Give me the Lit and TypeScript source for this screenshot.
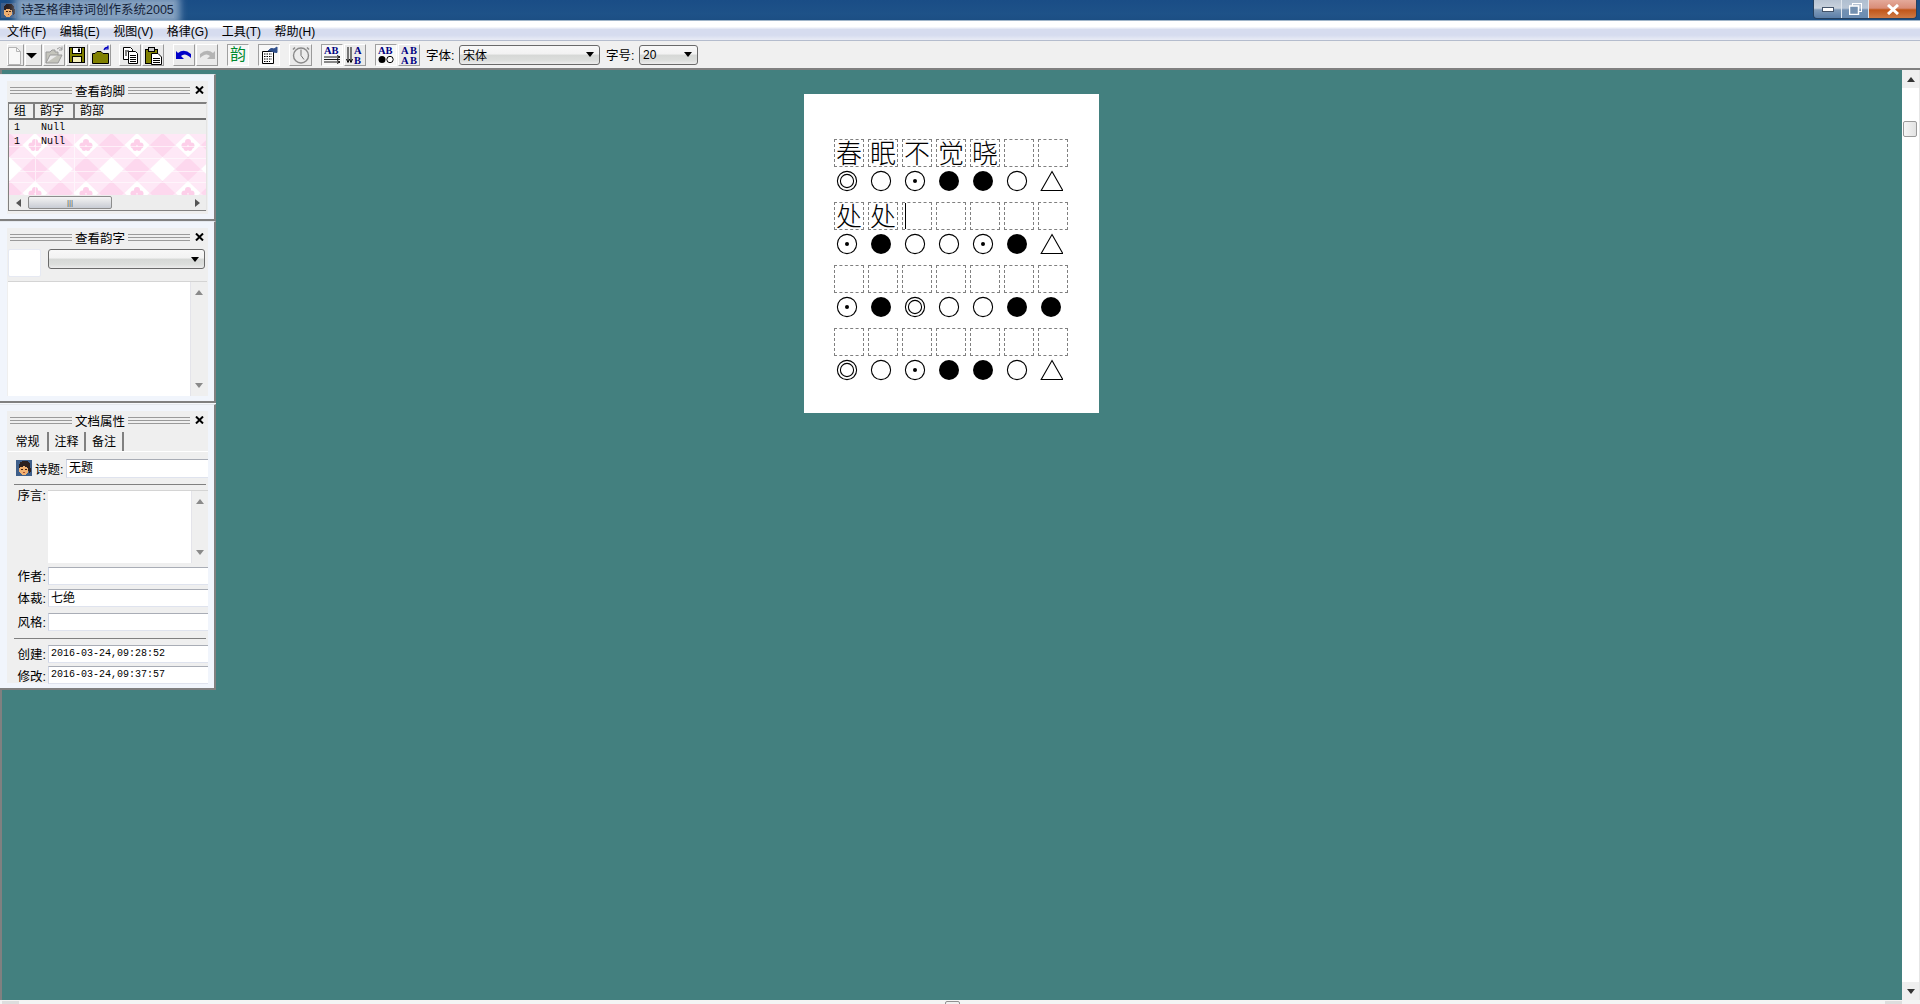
import { LitElement, html, css, svg, nothing } from "lit";
import { customElement } from "lit/decorators.js";

const avatar = (size: number) => html`<svg width=${size} height=${size} viewBox="0 0 16 16" shape-rendering="crispEdges">
  <rect width="16" height="16" fill="#3f5f8a"/>
  <path d="M3 6 L4 2 L7 1 L11 1 L14 4 L15 11 L13 13 L12 8 L8 6 L5 8 L3 9Z" fill="#2b2020"/>
  <path d="M3 8 L8 6 L12 8 L12 12 L9 15 L6 15 L3 12Z" fill="#f0b070"/>
  <rect x="5" y="9" width="2" height="1" fill="#402010"/><rect x="9" y="9" width="2" height="1" fill="#402010"/>
  <rect x="7" y="12" width="2" height="1" fill="#b05030"/>
</svg>`;

const I = {
  doc: svg`<path d="M3.5 3.5H11.5L15.5 7.5V20.5H3.5Z" fill="#f7f7f7" stroke="#b4b4b4"/><path d="M11.5 3.5V7.5H15.5" fill="none" stroke="#b4b4b4"/>`,
  drop: svg`<path d="M3 9H14L8.5 14.5Z" fill="#000"/>`,
  open: svg`<path d="M3 19V8H7L9 6H12V8H15V11H7L3 19H15L19 11H15" fill="#c4c4bc" stroke="#9a9a9a"/><path d="M14 5 Q17 2 19 5 M19 2.5V6H16" fill="none" stroke="#9a9a9a"/>`,
  save: svg`<rect x="3.5" y="3.5" width="15" height="15" fill="#808000" stroke="#000"/><rect x="6.5" y="3.5" width="9" height="6" fill="#fff" stroke="#000"/><rect x="12" y="4.5" width="2" height="3.5" fill="#000"/><rect x="6.5" y="12.5" width="9" height="6" fill="#f5f0c0" stroke="#000"/>`,
  folder: svg`<path d="M3.5 19.5V9.5H6L8 7.5H12L14 9.5H19.5V19.5Z" fill="#808000" stroke="#000"/><path d="M15 6 Q16 3 19 3.5M19 1.5V5H16" fill="none" stroke="#0000c0" stroke-width="1.2"/>`,
  copy: svg`<path d="M4.5 3.5H11.5L13.5 5.5V15.5H4.5Z" fill="#fff" stroke="#000"/><path d="M9.5 7.5H16.5L18.5 9.5V19.5H9.5Z" fill="#fff" stroke="#000"/><path d="M6 7H10M6 9H8M6 11H8M11 11.5H17M11 13.5H17M11 15.5H17M11 17.5H17" stroke="#000"/>`,
  paste: svg`<rect x="3.5" y="5.5" width="12" height="14" fill="#808000" stroke="#000"/><rect x="6.5" y="3.5" width="6" height="4" fill="#c8c8c8" stroke="#000"/><path d="M9.5 9.5H16L19.5 13V20.5H9.5Z" fill="#fff" stroke="#000"/><path d="M11 14.5H18M11 16.5H18M11 18.5H18" stroke="#000"/>`,
  undo: svg`<path d="M5 9 Q11 4 18 10 L18 14 Q12 8 8 12 L11 15 L3 15 L3 7Z" fill="#0000c8"/>`,
  redo: svg`<path d="M17 9 Q11 4 4 10 L4 14 Q10 8 14 12 L11 15 L19 15 L19 7Z" fill="#b4b4b4"/>`,
  props: svg`<path d="M4.5 7.5H15.5V19.5H4.5Z" fill="#fff" stroke="#000"/><path d="M6 10H14M6 12.5H14M6 15H14M6 17.5H12" stroke="#000" stroke-dasharray="1.5 1"/><path d="M10 7 Q13 3 16 5 L19 3V8.5L15 8" fill="#30508c" stroke="#30508c"/>`,
  clock: svg`<circle cx="11" cy="11.5" r="7.5" fill="#ececec" stroke="#8a8a8a" stroke-width="1.4"/><path d="M11 5.5V11.5L14 15.5" fill="none" stroke="#707070"/><path d="M5 3.5L3 5.5M17 3.5L19 5.5" stroke="#8a8a8a" stroke-width="1.5"/>`,
};

const ab = (inner: unknown) => html`<svg width="22" height="22" viewBox="0 0 22 22">${inner}</svg>`;
const T = (x: number, y: number, s: string, fs = 10.5) =>
  svg`<text x=${x} y=${y} font-family="Liberation Serif" font-weight="700" font-size=${fs} fill="#000080">${s}</text>`;

type Btn = { k?: unknown; txt?: boolean; on?: boolean; narrow?: boolean; wide?: boolean };
const groups: Btn[][] = [
  [{ k: I.doc, narrow: true }, { k: I.drop, narrow: true }, { k: I.open }, { k: I.save }, { k: I.folder }],
  [{ k: I.copy }, { k: I.paste }],
  [{ k: I.undo }, { k: I.redo }],
  [{ txt: true, on: true }],
  [{ k: I.props, on: true }],
  [{ k: I.clock, wide: true }],
  [
    { k: svg`${T(3, 10, "AB")}<path d="M3 13H19M3 15.5H19M3 18H19M16 11.5L19 13L16 14.5M16 16.5L19 18L16 19.5" fill="none" stroke="#000" stroke-width=".9"/>`, on: true },
    { k: svg`<path d="M4 3V18M7 3V18M2.5 15L4 18.5L5.5 15M5.5 15L7 18.5L8.5 15" fill="none" stroke="#000"/>${T(10, 10, "A")}${T(10, 19.5, "B")}` },
  ],
  [
    { k: svg`${T(3, 10, "AB")}<circle cx="7" cy="15.5" r="3.5" fill="#000"/><circle cx="15" cy="15.5" r="3.2" fill="#fff" stroke="#000"/>`, on: true },
    { k: svg`${T(3, 10, "A")}${T(12, 10, "B")}${T(3, 19.5, "A")}${T(12, 19.5, "B")}` },
  ],
];

type Sym = "d" | "o" | "p" | "f" | "t";
const rows: { chars: string[]; syms: Sym[]; caret?: number }[] = [
  { chars: ["春", "眠", "不", "觉", "晓", "", ""], syms: ["d", "o", "p", "f", "f", "o", "t"] },
  { chars: ["处", "处", "", "", "", "", ""], syms: ["p", "f", "o", "o", "p", "f", "t"], caret: 2 },
  { chars: ["", "", "", "", "", "", ""], syms: ["p", "f", "d", "o", "o", "f", "f"] },
  { chars: ["", "", "", "", "", "", ""], syms: ["d", "o", "p", "f", "f", "o", "t"] },
];

const sym = (s: Sym) => html`<svg class="sym" width="24" height="24" viewBox="0 0 24 24">
  ${s === "f" ? svg`<circle cx="12" cy="12" r="10" fill="#000"/>` : nothing}
  ${s === "o" ? svg`<circle cx="12" cy="12" r="9.6" fill="none" stroke="#000" stroke-width="1.1"/>` : nothing}
  ${s === "p" ? svg`<circle cx="12" cy="12" r="9.6" fill="none" stroke="#000" stroke-width="1.1"/><circle cx="12" cy="12" r="2" fill="#000"/>` : nothing}
  ${s === "d" ? svg`<circle cx="12" cy="12" r="9.6" fill="none" stroke="#000" stroke-width="1.1"/><circle cx="12" cy="12" r="6.6" fill="none" stroke="#000" stroke-width="1.1"/>` : nothing}
  ${s === "t" ? svg`<path d="M13 2.5L23.8 21.5H2.2Z" fill="none" stroke="#000" stroke-width="1.1"/>` : nothing}
</svg>`;

const arrow = (d: "u" | "d" | "l" | "r", c = "#6a6a6a") => {
  const p = { u: "M0 5L4 0L8 5Z", d: "M0 0H8L4 5Z", l: "M5 0V8L0 4Z", r: "M0 0V8L5 4Z" }[d];
  const w = d === "u" || d === "d" ? 8 : 5;
  const h = d === "u" || d === "d" ? 5 : 8;
  return html`<svg width=${w} height=${h} viewBox="0 0 ${w} ${h}"><path d=${p} fill=${c}/></svg>`;
};

const closeX = html`<svg class="x" width="9" height="8" viewBox="0 0 9 8"><path d="M1 .5L8 7.5M8 .5L1 7.5" stroke="#000" stroke-width="2"/></svg>`;

const pinkPattern = html`<svg class="pat" width="199" height="61">
  <defs>
    <pattern id="argyle" width="51" height="48" patternUnits="userSpaceOnUse" patternTransform="translate(26 11)">
      <rect width="51" height="48" fill="#fee8f6"/>
      <path d="M0 -12L12.5 0L0 12L-12.5 0ZM51 -12L63.5 0L51 12L38.5 0ZM0 36L12.5 48L0 60L-12.5 48ZM51 36L63.5 48L51 60L38.5 48Z" fill="#fff"/>
      <path d="M25.5 -12L38 0L25.5 12L13 0ZM25.5 36L38 48L25.5 60L13 48ZM0 12L12.5 24L0 36L-12.5 24ZM51 12L63.5 24L51 36L38.5 24Z" fill="#fdd8ee"/>
      <path d="M25.5 12L38 24L25.5 36L13 24Z" fill="#fff"/>
      <g fill="#fdcfe9">
        <circle cx="0" cy="-3" r="3"/><circle cx="-3.5" cy="0.5" r="3"/><circle cx="3.5" cy="0.5" r="3"/><circle cx="-2" cy="3.5" r="2.4"/><circle cx="2" cy="3.5" r="2.4"/>
        <circle cx="51" cy="-3" r="3"/><circle cx="47.5" cy="0.5" r="3"/><circle cx="54.5" cy="0.5" r="3"/><circle cx="49" cy="3.5" r="2.4"/><circle cx="53" cy="3.5" r="2.4"/>
        <circle cx="0" cy="45" r="3"/><circle cx="-3.5" cy="48.5" r="3"/><circle cx="3.5" cy="48.5" r="3"/><circle cx="51" cy="45" r="3"/><circle cx="47.5" cy="48.5" r="3"/><circle cx="54.5" cy="48.5" r="3"/>
      </g>
    </pattern>
  </defs>
  <rect width="199" height="61" fill="url(#argyle)"/>
  <path d="M0 12.5H199M0 24.5H199M0 37.5H199M0 48.5H199M26.5 0V61M65.5 0V61" stroke="#fff" opacity=".6"/>
</svg>`;

@customElement("app-root")
export class AppRoot extends LitElement {
  static styles = css`
    :host {
      display: block;
      width: 1920px;
      height: 1004px;
      overflow: hidden;
      font-family: "Liberation Sans", "Noto Sans CJK SC", sans-serif;
      font-size: 12px;
      color: #000;
      background: #fff;
    }
    .win { display: flex; flex-direction: column; height: 1004px; }
    .title {
      height: 20px; flex: none; display: flex; align-items: center; justify-content: space-between;
      background: linear-gradient(#1a4d86, #1e5288 70%, #1c4f84);
      border-bottom: 1px solid #9fb4c8;
      box-sizing: content-box;
    }
    .title-left { display: flex; align-items: center; gap: 5px; padding-left: 1px; }
    .title-text {
      font-size: 12.5px; color: #15233a; line-height: 16px;
      background: rgba(170, 190, 212, 0.72);
      box-shadow: 0 0 7px 6px rgba(170, 190, 212, 0.72);
    }
    .caps { display: flex; height: 18px; margin: 0 3px 2px 0; border: 1px solid #26415f; border-top: 0; border-radius: 0 0 4px 4px; align-self: flex-start; overflow: hidden; }
    .cap { display: flex; align-items: center; justify-content: center; border-right: 1px solid #dfe6ee; box-sizing: border-box; }
    .cap.min { width: 28px; background: linear-gradient(#b7c3d2, #c9d2dd 45%, #7f9ab8 55%, #5c7fa8); }
    .cap.max { width: 27px; background: linear-gradient(#b0bfd0, #b9c6d6 45%, #7391b3 55%, #6a8cb2); }
    .cap.close { width: 47px; border-right: 0; background: linear-gradient(#e4a99a, #d98d78 45%, #c0561a 55%, #cf7a45); }
    .menu {
      height: 19px; flex: none; display: flex; align-items: center; gap: 13.5px; padding-left: 7px;
      background: linear-gradient(#fff 0, #fff 30%, #d6dcef 45%, #d6dcef 75%, #e9ecf6 100%);
      border-bottom: 1px solid #b4bccd;
    }
    .toolbar {
      height: 27px; flex: none; display: flex; align-items: center; padding-left: 7px;
      background: #f0f0f0; border-bottom: 2px solid #808080; box-sizing: content-box;
    }
    .grp { display: flex; gap: 1px; margin-right: 9px; }
    .grp:first-child { margin-right: 8px; }
    .grp.lastg { margin-right: 6px; }
    .tb {
      width: 22px; height: 22px; display: flex; align-items: center; justify-content: center;
      box-sizing: border-box; background: #eaeaea;
      border: 1px solid; border-color: #fff #9a9a9a #9a9a9a #fff;
    }
    .tb.narrow { width: 17px; }
    .tb.wide { width: 23px; }
    .tb.on { background: #f7f7f7; border-color: #a0a0a0 #fff #fff #a0a0a0; }
    .tb svg { flex: none; }
    .yun { font-size: 16px; color: #008a2e; line-height: 20px; }
    .tlabel { width: 33px; box-sizing: border-box; flex: none; white-space: nowrap; font-size: 12.5px; }
    .combo {
      height: 20px; box-sizing: border-box; display: flex; align-items: center; justify-content: space-between;
      padding: 0 5px 0 3px; border: 1px solid #6a6a6a; border-radius: 3px; font-size: 12px; flex: none;
      background: linear-gradient(#f8f8f8 0, #f2f2f2 45%, #d6d8d6 50%, #dcdedc 80%, #ececec 100%);
    }
    .combo.font { width: 141px; margin-right: 6px; }
    .combo.size { width: 59px; }
    .main { flex: 1; display: flex; min-height: 0; position: relative; }
    .work {
      flex: 1; background: #43807f; border-left: 2px solid #808080; min-width: 0;
      display: flex; justify-content: center; padding-top: 24px; box-sizing: border-box;
    }
    .vscroll { width: 17px; flex: none; background: #fff; border-right: 1px solid #e6e6e6; display: flex; flex-direction: column; align-items: stretch; box-sizing: content-box; }
    .vbtn { height: 18px; background: #efefef; display: flex; align-items: center; justify-content: center; flex: none; }
    .vtrack { flex: 1; padding-top: 33px; }
    .vthumb { width: 14px; height: 16px; margin-left: 1px; box-sizing: border-box; border: 1px solid #9a9a9a; border-radius: 2px; background: linear-gradient(90deg, #f6f6f6, #e2e2e2); }
    .hscroll { height: 4px; flex: none; background: #f4f4f4; display: flex; overflow: hidden; padding: 1px 18px 0 2px; box-sizing: border-box; }
    .hbtn { width: 17px; height: 8px; background: #dedede; flex: none; }
    .hsp { flex: 1; }
    .hthumb { width: 15px; height: 8px; box-sizing: border-box; border: 1px solid #909090; border-radius: 2px; background: #f0f0f0; flex: none; }
    .page {
      width: 295px; height: 319px; box-sizing: border-box; background: #fff;
      margin-left: -1px; padding: 45px 0 0 30px; flex: none;
    }
    .cells { display: grid; grid-template-columns: repeat(7, 30px); column-gap: 4px; }
    .poem-row { margin-bottom: 9px; }
    .cell {
      height: 28px; box-sizing: border-box; border: 1px dashed #808080;
      font-family: "Noto Sans CJK SC", sans-serif; font-weight: 300;
      font-size: 26px; line-height: 23px; text-align: center; position: relative; white-space: nowrap;
    }
    .caret { position: absolute; left: 2px; top: 0; width: 1px; height: 26px; background: #000; }
    .syms { display: grid; grid-template-columns: repeat(7, 30px); column-gap: 4px; margin-top: 2px; height: 24px; justify-items: start; }
    .sym { display: block; margin-left: 1px; }

    .side { position: absolute; left: 0; top: 4px; width: 216px; display: flex; flex-direction: column; background: #f6f8fc; }
    .panel {
      box-sizing: border-box; width: 216px; padding: 6px 6px 5px 7px;
      background: #f1f5fc; border-right: 2px solid #808080; border-bottom: 2px solid #808080; border-top: 1px solid #e4e8ee;
    }
    .p1 { height: 147px; } .p2 { height: 182px; margin-bottom: 1px; } .p3 { height: 286px; }
    .inner { background: #efefef; height: 100%; width: 201px; display: flex; flex-direction: column; }
    .ph { height: 18px; flex: none; display: flex; align-items: center; margin: 0 0 3px 3px; gap: 3px; }
    .grip { width: 62px; height: 7px; flex: none; border-top: 1px solid #9a9a9a; border-bottom: 1px solid #9a9a9a; position: relative; box-sizing: border-box; }
    .grip::after { content: ""; position: absolute; left: 0; right: 0; top: 2px; height: 1px; background: #9a9a9a; }
    .ph-t { font-size: 12.5px; width: 50px; text-align: center; white-space: nowrap; flex: none; }
    .x { margin-left: 2px; flex: none; }

    .list { margin-left: 1px; width: 199px; height: 109px; box-sizing: border-box; border-top: 2px solid #808080; border-left: 1px solid #808080; border-right: 1px solid #e4e4e4; display: flex; flex-direction: column; flex: none; }
    .lhead { height: 16px; flex: none; display: flex; background: #efefef; border-bottom: 2px solid #707070; box-sizing: border-box; font-size: 12px; line-height: 15px; }
    .lhead span { box-sizing: border-box; border-right: 2px solid #808080; padding-left: 5px; height: 14px; }
    .c1 { width: 26px; } .c2 { width: 40px; }
    .lhead .c3 { flex: 1; border: 0; }
    .lbody { height: 75px; flex: none; position: relative; overflow: hidden; }
    .pat { position: absolute; left: 0; top: 14px; }
    .lrow { position: relative; height: 13px; display: flex; font: 10px/15px "Liberation Mono", monospace; }
    .lrow.first { background: #efefef; height: 14px; }
    .lrow span:first-child { width: 32px; padding-left: 5px; box-sizing: border-box; }
    .hbar { height: 16px; flex: none; background: #ededed; display: flex; align-items: center; justify-content: space-between; padding: 0 6px 0 7px; border-bottom: 1px solid #808080; position: relative; box-sizing: border-box; }
    .hb-thumb { position: absolute; left: 19px; top: 1px; width: 84px; height: 13px; box-sizing: border-box; border: 1px solid #8d8d8d; border-radius: 2px; background: linear-gradient(#f4f4f4, #dcdee2 55%, #c8ccd4); font-size: 8px; line-height: 11px; text-align: center; color: #555; }

    .swatch-row { display: flex; gap: 7px; margin: 0 0 3px 1px; flex: none; height: 29px; align-items: flex-start; }
    .swatch { width: 33px; height: 28px; background: #fff; border: 1px solid #e6e9f2; border-radius: 2px; box-sizing: border-box; }
    .combo.blank { width: 157px; }
    .memo { display: flex; background: #fff; box-sizing: border-box; border-top: 1px solid #d4d4d4; }
    .memo .fill { flex: 1; }
    .msb { width: 17px; flex: none; background: #efefef; border-left: 1px solid #e4e4ea; display: flex; flex-direction: column; align-items: center; justify-content: space-between; padding: 8px 0; box-sizing: border-box; }
    .m2 { margin-left: 1px; width: 199px; height: 115px; flex: none; }

    .tabs { display: flex; height: 19px; flex: none; border-bottom: 1px solid #fff; margin: 0 0 0 1px; box-sizing: content-box; width: 200px; }
    .tab { height: 19px; box-sizing: border-box; line-height: 20px; border-right: 2px solid #808080; text-align: center; font-size: 12px; }
    .t1 { width: 41px; } .t2 { width: 37px; } .t3 { width: 38px; }
    .form { display: flex; flex-direction: column; flex: none; }
    .frow { display: flex; align-items: center; flex: none; }
    .lab { width: 41px; padding-right: 2px; box-sizing: border-box; text-align: right; white-space: nowrap; font-size: 12.5px; flex: none; }
    .inp { flex: 1; height: 18px; background: #fff; box-sizing: border-box; border-top: 1px solid #a9adb6; border-left: 1px solid #cfd6e6; border-bottom: 1px solid #dfe3ee; padding-left: 2px; line-height: 16px; font-size: 12px; white-space: nowrap; }
    .mono { font: 10px/15px "Liberation Mono", monospace; }
    .hr { height: 1px; background: #808080; margin: 0 2px 0 7px; flex: none; }
    .ico { width: 16px; height: 16px; margin-left: 9px; flex: none; }
    .ico svg { display: block; }
    .lab2 { width: 34px; padding-left: 3px; box-sizing: border-box; white-space: nowrap; flex: none; font-size: 12.5px; }
    .r-title { height: 20px; margin-top: 6px; }
    .r-title .inp { height: 19px; }
    .r-pref { height: 73px; align-items: flex-start; margin-top: 5px; }
    .r-pref .lab { line-height: 12px; }
    .m3 { flex: 1; height: 73px; }
    .r-input { height: 19px; }
    .mt3 { margin-top: 3px; } .mt5 { margin-top: 5px; } .mt6 { margin-top: 6px; } .mt7 { margin-top: 7px; }
    .last { height: 18px; }
  `;

  private head(t: string) {
    return html`<div class="ph"><i class="grip"></i><span class="ph-t">${t}</span><i class="grip"></i>${closeX}</div>`;
  }

  render() {
    return html`<div class="win">
      <div class="title">
        <div class="title-left">${avatar(15)}<span class="title-text">诗圣格律诗词创作系统2005</span></div>
        <div class="caps">
          <div class="cap min"><svg width="12" height="5"><rect x=".5" y=".5" width="11" height="4" fill="#fff" stroke="#44546a"/></svg></div>
          <div class="cap max"><svg width="13" height="12"><rect x="3.5" y=".5" width="9" height="8" fill="none" stroke="#fff"/><rect x=".5" y="3" width="9" height="8.5" fill="#7390b0" stroke="#fff" stroke-width="1.5"/></svg></div>
          <div class="cap close"><svg width="14" height="11"><path d="M2 1L12 10M12 1L2 10" stroke="#fff" stroke-width="3"/></svg></div>
        </div>
      </div>
      <div class="menu">
        ${["文件(F)", "编辑(E)", "视图(V)", "格律(G)", "工具(T)", "帮助(H)"].map((m) => html`<span>${m}</span>`)}
      </div>
      <div class="toolbar">
        ${groups.map(
          (g, gi) => html`<div class="grp ${gi === groups.length - 1 ? "lastg" : ""}">
            ${g.map(
              (b) => html`<div class="tb ${b.on ? "on" : ""} ${b.narrow ? "narrow" : ""} ${b.wide ? "wide" : ""}">
                ${b.txt ? html`<span class="yun">韵</span>` : ab(b.k)}
              </div>`
            )}
          </div>`
        )}
        <span class="tlabel">字体:</span>
        <div class="combo font"><span>宋体</span>${arrow("d", "#000")}</div>
        <span class="tlabel">字号:</span>
        <div class="combo size"><span>20</span>${arrow("d", "#000")}</div>
      </div>
      <div class="main">
        <div class="work">
          <div class="page">
            ${rows.map(
              (r) => html`<div class="poem-row">
                <div class="cells">
                  ${r.chars.map((c, i) => html`<div class="cell">${c}${r.caret === i ? html`<i class="caret"></i>` : nothing}</div>`)}
                </div>
                <div class="syms">${r.syms.map(sym)}</div>
              </div>`
            )}
          </div>
        </div>
        <div class="vscroll">
          <div class="vbtn">${arrow("u", "#333")}</div>
          <div class="vtrack"><div class="vthumb"></div></div>
          <div class="vbtn">${arrow("d", "#333")}</div>
        </div>
        <div class="side">
          <section class="panel p1"><div class="inner">
            ${this.head("查看韵脚")}
            <div class="list">
              <div class="lhead"><span class="c1">组</span><span class="c2">韵字</span><span class="c3">韵部</span></div>
              <div class="lbody">
                ${pinkPattern}
                <div class="lrow first"><span>1</span><span>Null</span></div>
                <div class="lrow"><span>1</span><span>Null</span></div>
              </div>
              <div class="hbar">${arrow("l", "#555")}<div class="hb-thumb">|||</div>${arrow("r", "#555")}</div>
            </div>
          </div></section>
          <section class="panel p2"><div class="inner">
            ${this.head("查看韵字")}
            <div class="swatch-row">
              <div class="swatch"></div>
              <div class="combo blank"><span></span>${arrow("d", "#000")}</div>
            </div>
            <div class="memo m2"><div class="fill"></div><div class="msb">${arrow("u", "#8a8a8a")}${arrow("d", "#8a8a8a")}</div></div>
          </div></section>
          <section class="panel p3"><div class="inner">
            ${this.head("文档属性")}
            <div class="tabs">
              <div class="tab t1">常规</div><div class="tab t2">注释</div><div class="tab t3">备注</div>
            </div>
            <div class="form">
              <div class="frow r-title">
                <span class="ico">${avatar(16)}</span>
                <span class="lab2">诗题:</span>
                <div class="inp">无题</div>
              </div>
              <div class="hr mt6"></div>
              <div class="frow r-pref">
                <span class="lab">序言:</span>
                <div class="memo m3"><div class="fill"></div><div class="msb">${arrow("u", "#8a8a8a")}${arrow("d", "#8a8a8a")}</div></div>
              </div>
              <div class="frow r-input mt3"><span class="lab">作者:</span><div class="inp"></div></div>
              <div class="frow r-input mt3"><span class="lab">体裁:</span><div class="inp">七绝</div></div>
              <div class="frow r-input mt5"><span class="lab">风格:</span><div class="inp"></div></div>
              <div class="hr mt7"></div>
              <div class="frow r-input mt5"><span class="lab">创建:</span><div class="inp mono">2016-03-24,09:28:52</div></div>
              <div class="frow r-input mt3 last"><span class="lab">修改:</span><div class="inp mono">2016-03-24,09:37:57</div></div>
            </div>
          </div></section>
        </div>
      </div>
      <div class="hscroll"><div class="hbtn"></div><div class="hsp"></div><div class="hthumb"></div><div class="hsp"></div><div class="hbtn"></div></div>
    </div>`;
  }
}
